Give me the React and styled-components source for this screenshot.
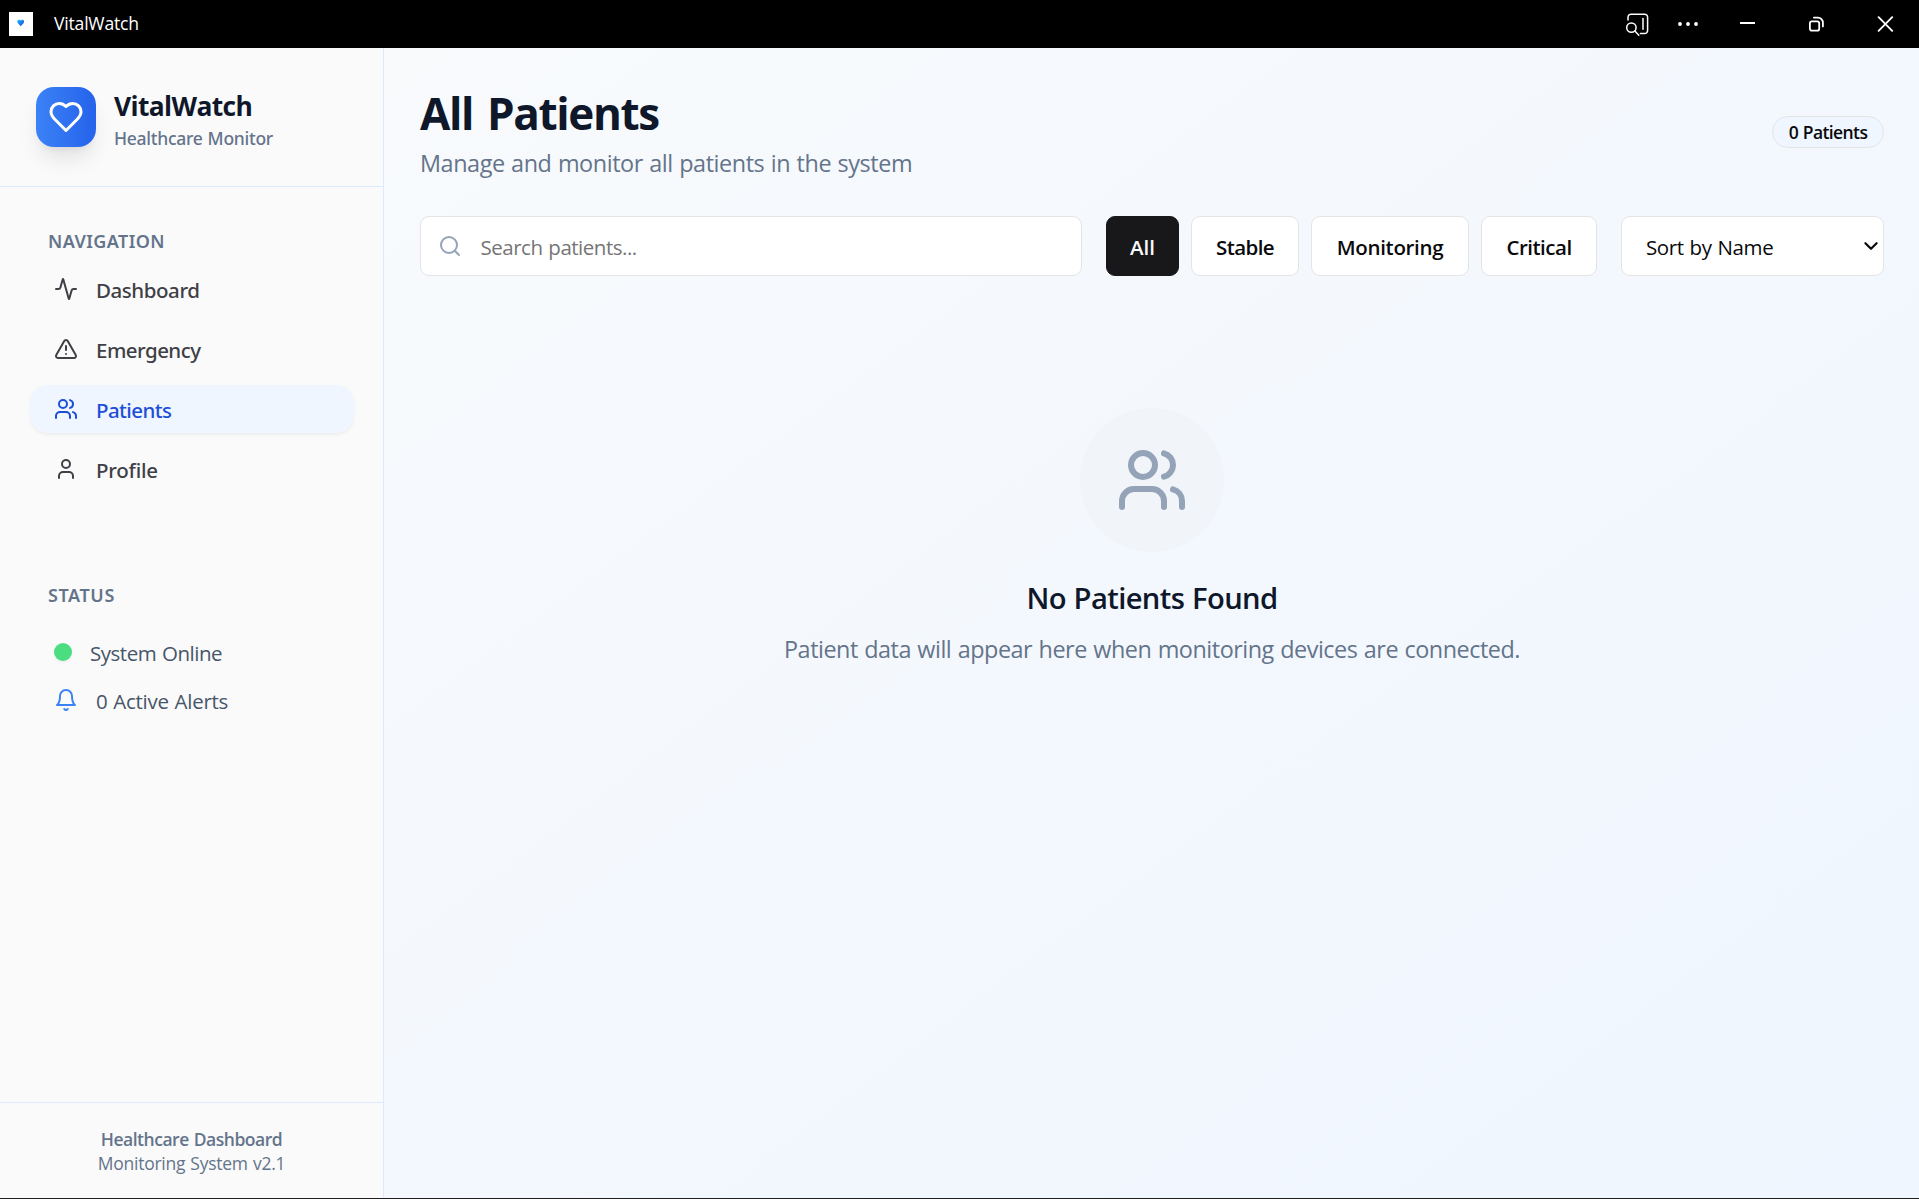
import React from 'react';
import styled, { createGlobalStyle } from 'styled-components';

const GlobalStyle = createGlobalStyle`
  *, *::before, *::after { box-sizing: border-box; }
  body {
    margin: 0;
    overflow: hidden;
    background: #000;
    color: #09090b;
    font-family: "Segoe UI", "Open Sans", "Noto Sans", sans-serif;
    word-spacing: 0.05em;
  }
  h1, h2, p { margin: 0; }
`;

const mediumFont = '"Segoe UI", "Noto Sans", "Open Sans", sans-serif';

const Window = styled.div`
  display: flex;
  flex-direction: column;
  width: 100vw;
  height: 100vh;
  border-bottom: 1px solid #1f1f1f;
`;

/* ---------- Title bar ---------- */

const TitleBar = styled.header`
  display: flex;
  align-items: center;
  flex: none;
  height: 48px;
  padding-left: 9px;
  background: #000;
  color: #fff;
`;

const AppTitle = styled.span`
  flex: 1;
  margin-left: 21px;
  padding-bottom: 2px;
  font-size: 17.6px;
  line-height: 24px;
  letter-spacing: -0.21px;
`;

const WindowControl = styled.button`
  display: flex;
  align-items: center;
  justify-content: center;
  flex: none;
  width: ${({ $width }) => $width}px;
  height: 48px;
  padding: 0;
  border: 0;
  background: transparent;
  color: #fff;

  svg { display: block; }
`;

/* ---------- Sidebar ---------- */

const Body = styled.div`
  display: flex;
  flex: 1;
  min-height: 0;
`;

const Sidebar = styled.aside`
  display: flex;
  flex-direction: column;
  flex: none;
  width: 384px;
  background: #fafafa;
  border-right: 1px solid #dbeafe;
`;

const Brand = styled.div`
  display: flex;
  align-items: center;
  gap: 18px;
  height: 139px;
  padding: 0 36px;
  border-bottom: 1px solid #dbeafe;
`;

const LogoTile = styled.div`
  display: flex;
  align-items: center;
  justify-content: center;
  width: 60px;
  height: 60px;
  border-radius: 18px;
  background: linear-gradient(to right, #3b82f6, #2563eb);
  box-shadow: 0 15px 22.5px -4.5px rgba(0, 0, 0, 0.1), 0 6px 9px -6px rgba(0, 0, 0, 0.1);
  color: #fff;
`;

const BrandText = styled.div`
  padding-top: 4px;
`;

const BrandName = styled.h2`
  font-size: 26.4px;
  font-weight: 700;
  line-height: 38px;
  letter-spacing: -0.62px;
  color: #0f172a;
`;

const BrandTagline = styled.p`
  font-family: ${mediumFont};
  font-size: 17.5px;
  font-weight: 500;
  line-height: 26px;
  letter-spacing: -0.27px;
  color: #64748b;
`;

const SidebarContent = styled.div`
  flex: 1;
  padding: 30px 29.5px 0;
`;

const Group = styled.section`
  margin-bottom: 78px;
`;

const GroupLabel = styled.div`
  padding-left: 18.5px;
  font-family: ${mediumFont};
  font-size: 18px;
  font-weight: 600;
  line-height: 48px;
  letter-spacing: ${({ $tracking }) => $tracking}px;
  color: #64748b;
`;

const NavList = styled.nav`
  display: flex;
  flex-direction: column;
  gap: 12px;
`;

const NavItem = styled.a`
  display: flex;
  align-items: center;
  gap: 18px;
  height: 48px;
  padding: 0 24.5px;
  border-radius: 18px;
  background: ${({ $active }) => ($active ? '#eff6ff' : 'transparent')};
  box-shadow: ${({ $active }) => ($active ? '0 1.5px 3px rgba(0, 0, 0, 0.05)' : 'none')};
  color: ${({ $active }) => ($active ? '#1d4ed8' : '#3f3f46')};
`;

const NavLabel = styled.span`
  padding-top: 1px;
  font-family: ${mediumFont};
  font-size: 20.5px;
  font-weight: 500;
  line-height: 30px;
  letter-spacing: ${({ $tracking }) => $tracking}px;
`;

const StatusList = styled.div`
  padding-top: 9px;
`;

const StatusRow = styled.div`
  display: flex;
  align-items: center;
  gap: 18px;
  height: 48px;
  padding-left: 24.5px;
  color: #3b82f6;
`;

const StatusDot = styled.span`
  width: 18px;
  height: 18px;
  border-radius: 50%;
  background: #4ade80;
  box-shadow: 0 1.5px 3px rgba(0, 0, 0, 0.05);
`;

const StatusText = styled.span`
  padding-top: 1px;
  font-size: 20.5px;
  line-height: 30px;
  letter-spacing: ${({ $tracking }) => $tracking}px;
  color: #475569;
`;

const SidebarFooter = styled.footer`
  height: 96px;
  padding-top: 24px;
  border-top: 1px solid #dbeafe;
  text-align: center;
`;

const FooterLine = styled.p`
  font-size: 17.5px;
  font-weight: ${({ $strong }) => ($strong ? 600 : 400)};
  line-height: 24px;
  letter-spacing: ${({ $strong }) => ($strong ? -0.47 : -0.25)}px;
  color: #64748b;
`;

/* ---------- Main panel ---------- */

const Main = styled.main`
  flex: 1;
  padding: 36px 35px 0 36px;
  background: linear-gradient(to bottom right, #f8fafc, #eff6ff);
`;

const PageHeader = styled.div`
  display: flex;
  align-items: center;
  justify-content: space-between;
  height: 96px;
`;

const PageTitle = styled.h1`
  padding-top: 1px;
  font-size: 44px;
  font-weight: 700;
  line-height: 57px;
  letter-spacing: -1.38px;
  word-spacing: 4px;
  color: #0f172a;
`;

const PageSubtitle = styled.p`
  padding-top: 4px;
  font-size: 23.4px;
  line-height: 35px;
  letter-spacing: -0.43px;
  color: #64748b;
`;

const CountBadge = styled.span`
  display: flex;
  justify-content: center;
  width: 112px;
  height: 32px;
  border: 1px solid #e4e4e7;
  border-radius: 16px;
  background: #eff6ff;
  font-size: 17.5px;
  font-weight: 600;
  line-height: 31px;
  letter-spacing: -0.6px;
`;

const Controls = styled.div`
  display: flex;
  gap: 24px;
  height: 60px;
  margin-top: 36px;
`;

const SearchField = styled.label`
  display: flex;
  align-items: center;
  gap: 18.5px;
  flex: 1;
  padding-left: 17px;
  border: 1px solid #e4e4e7;
  border-radius: 9px;
  background: #fff;
  color: #94a3b8;
`;

const SearchInput = styled.input`
  flex: 1;
  min-width: 0;
  height: 58px;
  padding: 1px 0 0;
  border: 0;
  outline: 0;
  background: transparent;
  font: 400 20.5px "Segoe UI", "Open Sans", "Noto Sans", sans-serif;
  letter-spacing: -0.49px;
  word-spacing: 0.05em;

  &::placeholder { color: #757575; opacity: 1; }
`;

const Filters = styled.div`
  display: flex;
  gap: 12px;
`;

const FilterButton = styled.button`
  width: ${({ $width }) => $width}px;
  height: 60px;
  padding: 1px 0 0;
  border: 1px solid ${({ $active }) => ($active ? '#18181b' : '#e4e4e7')};
  border-radius: 9px;
  background: ${({ $active }) => ($active ? '#18181b' : '#fff')};
  color: ${({ $active }) => ($active ? '#fafafa' : '#09090b')};
  font: 600 20.5px "Segoe UI", "Open Sans", "Noto Sans", sans-serif;
  letter-spacing: ${({ $tracking }) => $tracking}px;
`;

const SortSelect = styled.button`
  display: flex;
  align-items: center;
  justify-content: space-between;
  width: 263px;
  height: 60px;
  padding: 0 3px 0 24px;
  border: 1px solid #e4e4e7;
  border-radius: 9px;
  background: #fff;
  color: #09090b;
  font: 400 20.5px "Segoe UI", "Open Sans", "Noto Sans", sans-serif;
  letter-spacing: -0.4px;
  word-spacing: 0.05em;

  span { padding-top: 1px; }
`;

const EmptyState = styled.section`
  display: flex;
  flex-direction: column;
  align-items: center;
  margin-top: 132px;
`;

const EmptyIcon = styled.div`
  display: flex;
  align-items: center;
  justify-content: center;
  width: 144px;
  height: 144px;
  border-radius: 50%;
  background: #f1f5f9;
  color: #94a3b8;
`;

const EmptyTitle = styled.h2`
  margin-top: 25px;
  font-size: 29.2px;
  font-weight: 600;
  line-height: 43px;
  letter-spacing: -0.625px;
  color: #0f172a;
`;

const EmptyText = styled.p`
  margin-top: 11px;
  font-size: 23.4px;
  line-height: 36px;
  letter-spacing: -0.475px;
  color: #64748b;
`;

/* ---------- Icons ---------- */

const IconSvg = styled.svg`
  display: block;
  flex: none;
  fill: none;
  stroke: currentColor;
  stroke-width: 2;
  stroke-linecap: round;
  stroke-linejoin: round;
`;

const Icon = ({ size = 24, children }) => (
  <IconSvg width={size} height={size} viewBox="0 0 24 24">{children}</IconSvg>
);

const ActivityIcon = () => (
  <Icon>
    <path d="M22 12h-2.48a2 2 0 0 0-1.93 1.46l-2.35 8.36a.25.25 0 0 1-.48 0L9.24 2.18a.25.25 0 0 0-.48 0l-2.35 8.36A2 2 0 0 1 4.49 12H2" />
  </Icon>
);

const AlertIcon = () => (
  <Icon>
    <path d="m21.73 18-8-14a2 2 0 0 0-3.48 0l-8 14A2 2 0 0 0 4 21h16a2 2 0 0 0 1.73-3" />
    <path d="M12 9v4" />
    <path d="M12 17h.01" />
  </Icon>
);

const UsersIcon = ({ size }) => (
  <Icon size={size}>
    <path d="M16 21v-2a4 4 0 0 0-4-4H6a4 4 0 0 0-4 4v2" />
    <circle cx="9" cy="7" r="4" />
    <path d="M22 21v-2a4 4 0 0 0-3-3.87" />
    <path d="M16 3.13a4 4 0 0 1 0 7.75" />
  </Icon>
);

const UserIcon = () => (
  <Icon>
    <path d="M19 21v-2a4 4 0 0 0-4-4H9a4 4 0 0 0-4 4v2" />
    <circle cx="12" cy="7" r="4" />
  </Icon>
);

const BellIcon = () => (
  <Icon>
    <path d="M6 8a6 6 0 0 1 12 0c0 7 3 9 3 9H3s3-2 3-9" />
    <path d="M10.3 21a1.94 1.94 0 0 0 3.4 0" />
  </Icon>
);

const HeartIcon = () => (
  <Icon size={36}>
    <path d="M19 14c1.49-1.46 3-3.21 3-5.5A5.5 5.5 0 0 0 16.5 3c-1.76 0-3 .5-4.5 2-1.5-1.5-2.74-2-4.5-2A5.5 5.5 0 0 0 2 8.5c0 2.3 1.5 4.05 3 5.5l7 7Z" />
  </Icon>
);

const SearchIcon = () => (
  <Icon>
    <circle cx="11" cy="11" r="8" />
    <path d="m21 21-4.3-4.3" />
  </Icon>
);

const AppIcon = () => (
  <svg width="24" height="24" viewBox="0 0 24 24">
    <defs>
      <linearGradient id="appHeart" x1="0" y1="0" x2="1" y2="1">
        <stop offset="0" stopColor="#0ccdf0" />
        <stop offset="0.55" stopColor="#1d74ee" />
        <stop offset="1" stopColor="#2352e0" />
      </linearGradient>
    </defs>
    <rect width="24" height="24" fill="#fff" />
    <path d="M11.7 14.2 8.9 11.2C7.6 9.6 8.4 7.7 10 7.7c.8 0 1.4.4 1.7.9.3-.5.9-.9 1.7-.9 1.6 0 2.4 1.9 1.1 3.5Z" fill="url(#appHeart)" />
    <rect x="6" y="15.6" width="12" height="0.8" fill="#f4f6f9" />
  </svg>
);

const PanelSearchIcon = () => (
  <svg width="26" height="26" viewBox="0 0 26 26" fill="none" stroke="currentColor" strokeWidth="1.5" strokeLinecap="round">
    <path d="M3 9V6.2A3 3 0 0 1 6 3.2H19.6A3 3 0 0 1 22.6 6.2V19.6A3 3 0 0 1 19.6 22.6H15.4" />
    <path d="M18 7.6V18.2" />
    <circle cx="6.4" cy="16.6" r="4.7" />
    <path d="M9.9 20.1 13.8 24.2" />
  </svg>
);

const DotsIcon = () => (
  <svg width="22" height="6" viewBox="0 0 22 6" fill="currentColor">
    <circle cx="3" cy="3" r="1.9" />
    <circle cx="11" cy="3" r="1.9" />
    <circle cx="19" cy="3" r="1.9" />
  </svg>
);

const MinimizeIcon = () => (
  <svg width="15" height="4" viewBox="0 0 15 4" fill="currentColor">
    <path d="M0 0h15v2H0z" />
  </svg>
);

const RestoreIcon = () => (
  <svg width="17" height="17" viewBox="0 0 17 17" fill="none" stroke="currentColor" strokeWidth="1.8" strokeLinecap="round">
    <rect x="1.9" y="5.4" width="9.3" height="9.3" rx="2" />
    <path d="M5.9 1.6H9.6A5 5 0 0 1 14.9 6.9V10.4" />
  </svg>
);

const CloseIcon = () => (
  <svg width="17" height="17" viewBox="0 0 17 17" fill="none" stroke="currentColor" strokeWidth="1.9" strokeLinecap="round">
    <path d="M1.6 1.2 15.2 14.8M15.2 1.2 1.6 14.8" />
  </svg>
);

const ChevronIcon = () => (
  <svg width="18" height="18" viewBox="0 0 18 18" fill="none" stroke="currentColor" strokeWidth="2.2" strokeLinecap="round" strokeLinejoin="round">
    <path d="M3.4 6.2 9 11.8 14.6 6.2" />
  </svg>
);

/* ---------- Data ---------- */

const navItems = [
  { label: 'Dashboard', icon: ActivityIcon, tracking: -0.44 },
  { label: 'Emergency', icon: AlertIcon, tracking: -0.53 },
  { label: 'Patients', icon: UsersIcon, tracking: -0.58, active: true },
  { label: 'Profile', icon: UserIcon, tracking: -0.24 },
];

const filters = [
  { label: 'All', width: 73, tracking: 0, active: true },
  { label: 'Stable', width: 108, tracking: -0.6 },
  { label: 'Monitoring', width: 158, tracking: -0.33 },
  { label: 'Critical', width: 116, tracking: -0.49 },
];

export default function App() {
  return (
    <>
      <GlobalStyle />
      <Window>
        <TitleBar>
          <AppIcon />
          <AppTitle>VitalWatch</AppTitle>
          <WindowControl $width={50} aria-label="Search tabs"><PanelSearchIcon /></WindowControl>
          <WindowControl $width={50} aria-label="More"><DotsIcon /></WindowControl>
          <WindowControl $width={69} aria-label="Minimize"><MinimizeIcon /></WindowControl>
          <WindowControl $width={69} aria-label="Restore"><RestoreIcon /></WindowControl>
          <WindowControl $width={68} aria-label="Close"><CloseIcon /></WindowControl>
        </TitleBar>
        <Body>
          <Sidebar>
            <Brand>
              <LogoTile><HeartIcon /></LogoTile>
              <BrandText>
                <BrandName>VitalWatch</BrandName>
                <BrandTagline>Healthcare Monitor</BrandTagline>
              </BrandText>
            </Brand>
            <SidebarContent>
              <Group>
                <GroupLabel $tracking={0.41}>NAVIGATION</GroupLabel>
                <NavList>
                  {navItems.map(({ label, icon: Glyph, tracking, active }) => (
                    <NavItem key={label} $active={active}>
                      <Glyph />
                      <NavLabel $tracking={tracking}>{label}</NavLabel>
                    </NavItem>
                  ))}
                </NavList>
              </Group>
              <Group>
                <GroupLabel $tracking={0.6}>STATUS</GroupLabel>
                <StatusList>
                  <StatusRow>
                    <StatusDot />
                    <StatusText $tracking={-0.47}>System Online</StatusText>
                  </StatusRow>
                  <StatusRow>
                    <BellIcon />
                    <StatusText $tracking={-0.27}>0 Active Alerts</StatusText>
                  </StatusRow>
                </StatusList>
              </Group>
            </SidebarContent>
            <SidebarFooter>
              <FooterLine $strong>Healthcare Dashboard</FooterLine>
              <FooterLine>Monitoring System v2.1</FooterLine>
            </SidebarFooter>
          </Sidebar>
          <Main>
            <PageHeader>
              <div>
                <PageTitle>All Patients</PageTitle>
                <PageSubtitle>Manage and monitor all patients in the system</PageSubtitle>
              </div>
              <CountBadge>0 Patients</CountBadge>
            </PageHeader>
            <Controls>
              <SearchField>
                <SearchIcon />
                <SearchInput placeholder="Search patients..." />
              </SearchField>
              <Filters>
                {filters.map(({ label, width, tracking, active }) => (
                  <FilterButton key={label} $width={width} $tracking={tracking} $active={active}>
                    {label}
                  </FilterButton>
                ))}
              </Filters>
              <SortSelect>
                <span>Sort by Name</span>
                <ChevronIcon />
              </SortSelect>
            </Controls>
            <EmptyState>
              <EmptyIcon><UsersIcon size={72} /></EmptyIcon>
              <EmptyTitle>No Patients Found</EmptyTitle>
              <EmptyText>Patient data will appear here when monitoring devices are connected.</EmptyText>
            </EmptyState>
          </Main>
        </Body>
      </Window>
    </>
  );
}
